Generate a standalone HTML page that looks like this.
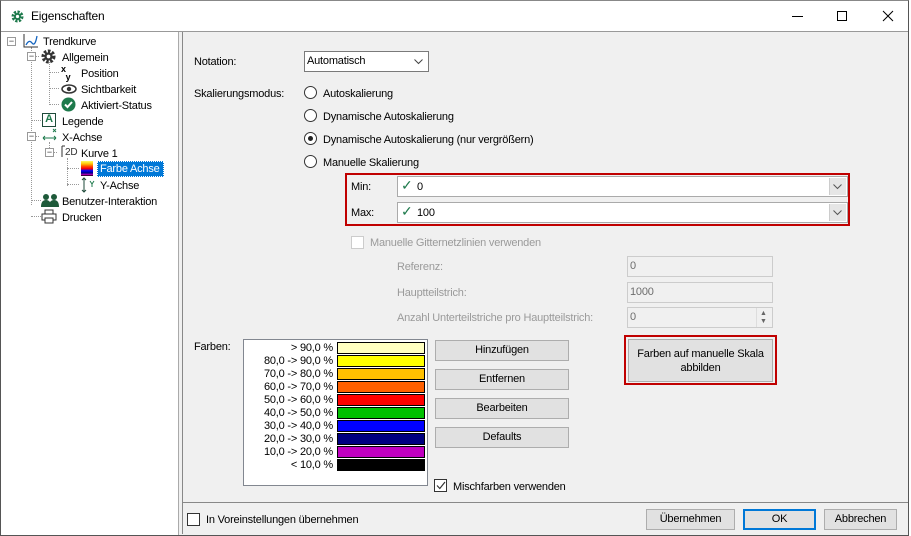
<!DOCTYPE html>
<html><head><meta charset="utf-8"><style>
*{box-sizing:border-box;margin:0;padding:0}
body{width:911px;height:536px;background:#fff;font-family:"Liberation Sans",sans-serif;font-size:11px;line-height:17px;letter-spacing:-0.2px;color:#000;position:relative;overflow:hidden}
.a{position:absolute;white-space:nowrap}
.win{position:absolute;left:0;top:0;width:909px;height:536px;border:1px solid #555;border-top-color:#888;background:#f0f0f0}
.title{position:absolute;left:0;top:0;width:907px;height:31px;background:#fff;border-bottom:1px solid #999}
.tree{position:absolute;left:0;top:31px;width:178px;height:503px;background:#fff;border-right:1px solid #aaa}
.tl{position:absolute;white-space:nowrap}
.dot{position:absolute;border-color:#999;border-style:dotted;border-width:0}
.pm{position:absolute;width:9px;height:9px;border:1px solid #999;background:#fff;font-size:9px;line-height:6px;text-align:center;color:#333;letter-spacing:0}
.btn{position:absolute;background:#e1e1e1;border:1px solid #adadad;text-align:center;line-height:19px;white-space:nowrap}
.fld{position:absolute;background:#fff;border:1px solid #7a7a7a}
.dis{position:absolute;background:#f0f0f0;border:1px solid #ccc;color:#6d6d6d;padding-left:2px;line-height:19px}
.rad{position:absolute;width:13px;height:13px;border:1px solid #333;border-radius:50%;background:#fff}
.cb{position:absolute;width:13px;height:13px;border:1px solid #333;background:#fff}
.gray{color:#9a9a9a}
.sw{position:absolute;left:337px;width:88px;height:12px;border:1px solid #000}
.sl{position:absolute;right:578px;text-align:right;line-height:13px;white-space:nowrap}
.dd{position:absolute;width:17px;top:1px;bottom:1px;right:1px;background:#e6e6e6;border-left:1px solid #ccc}
</style></head><body>
<div class="win">
<div class="title">
<svg class="a" style="left:10px;top:9px" width="13" height="13" viewBox="0 0 13 13"><circle cx="6.5" cy="6.5" r="4.5" fill="none" stroke="#1e7a4c" stroke-width="3" stroke-dasharray="2.2 1.3"/><circle cx="6.5" cy="6.5" r="3.5" fill="#1e7a4c"/><circle cx="6.5" cy="6.5" r="1.6" fill="#fff"/></svg>
<div class="a" style="left:30px;top:7px;font-size:12px">Eigenschaften</div>
<div class="a" style="left:791px;top:15px;width:11px;height:1px;background:#000"></div>
<div class="a" style="left:836px;top:10px;width:10px;height:10px;border:1px solid #000"></div>
<svg class="a" style="left:881px;top:9px" width="12" height="12"><path d="M1 1L11 11M11 1L1 11" stroke="#000" stroke-width="1"/></svg>
</div>
<div class="tree">
<div class="dot" style="left:30px;top:15px;height:158px;border-left-width:1px"></div>
<div class="dot" style="left:30px;top:24px;width:8px;border-top-width:1px"></div>
<div class="dot" style="left:30px;top:88px;width:10px;border-top-width:1px"></div>
<div class="dot" style="left:30px;top:104px;width:8px;border-top-width:1px"></div>
<div class="dot" style="left:30px;top:168px;width:10px;border-top-width:1px"></div>
<div class="dot" style="left:30px;top:184px;width:10px;border-top-width:1px"></div>
<div class="dot" style="left:48px;top:30px;height:43px;border-left-width:1px"></div>
<div class="dot" style="left:48px;top:40px;width:10px;border-top-width:1px"></div>
<div class="dot" style="left:48px;top:56px;width:10px;border-top-width:1px"></div>
<div class="dot" style="left:48px;top:72px;width:10px;border-top-width:1px"></div>
<div class="dot" style="left:48px;top:110px;height:12px;border-left-width:1px"></div>
<div class="dot" style="left:48px;top:120px;width:8px;border-top-width:1px"></div>
<div class="dot" style="left:66px;top:126px;height:28px;border-left-width:1px"></div>
<div class="dot" style="left:66px;top:136px;width:12px;border-top-width:1px"></div>
<div class="dot" style="left:66px;top:152px;width:12px;border-top-width:1px"></div>
<div class="pm" style="left:6px;top:5px">−</div>
<div class="pm" style="left:26px;top:20px">−</div>
<div class="pm" style="left:26px;top:100px">−</div>
<div class="pm" style="left:44px;top:116px">−</div>
<svg class="a" style="left:22px;top:1px" width="16" height="16"><path d="M1 1V14H15" stroke="#333" fill="none"/><path d="M3 12Q6 6 9 10T14 3" stroke="#1565c0" fill="none" stroke-width="1.3"/></svg>
<div class="tl" style="left:42px;top:2px">Trendkurve</div>
<svg class="a" style="left:40px;top:17px" width="15" height="15" viewBox="0 0 13 13"><circle cx="6.5" cy="6.5" r="4.6" fill="none" stroke="#333" stroke-width="3" stroke-dasharray="2.2 1.3"/><circle cx="6.5" cy="6.5" r="3.6" fill="#333"/><circle cx="6.5" cy="6.5" r="1.6" fill="#fff"/></svg>
<div class="tl" style="left:61px;top:18px">Allgemein</div>
<div class="tl" style="left:60px;top:33px;font-size:9px;line-height:8px;font-weight:bold">x<br>&nbsp;&nbsp;y</div>
<div class="tl" style="left:80px;top:34px">Position</div>
<svg class="a" style="left:60px;top:52px" width="16" height="10"><ellipse cx="8" cy="5" rx="7" ry="4" fill="none" stroke="#333" stroke-width="1.5"/><circle cx="8" cy="5" r="2.2" fill="#333"/></svg>
<div class="tl" style="left:80px;top:50px">Sichtbarkeit</div>
<svg class="a" style="left:60px;top:65px" width="15" height="15"><circle cx="7.5" cy="7.5" r="7" fill="#1e7a4c"/><path d="M4 7.5L6.5 10L11 5" stroke="#fff" stroke-width="2" fill="none"/></svg>
<div class="tl" style="left:80px;top:66px">Aktiviert-Status</div>
<div class="a" style="left:41px;top:81px;width:14px;height:14px;border:1.5px solid #1e4a3a;font-size:11px;font-weight:bold;line-height:11px;text-align:center;color:#1e7a4c">A</div>
<div class="tl" style="left:61px;top:82px">Legende</div>
<svg class="a" style="left:40px;top:95px" width="18" height="16"><path d="M2 11H15M2 11L4 9M2 11L4 13M15 11L13 9M15 11L13 13" stroke="#1e7a4c" fill="none"/><path d="M12 2L15 5M15 2L12 5" stroke="#1e7a4c"/></svg>
<div class="tl" style="left:61px;top:98px">X-Achse</div>
<svg class="a" style="left:60px;top:112px" width="18" height="15"><path d="M1 2H4M1 2V13" stroke="#333" fill="none"/><text x="4" y="11" font-size="10" font-family="Liberation Sans" fill="#333">2D</text></svg>
<div class="tl" style="left:80px;top:114px">Kurve 1</div>
<div class="a" style="left:80px;top:129px;width:12px;height:15px;background:linear-gradient(#ffff60 0,#ffc000 20%,#ff5000 35%,#ff0000 50%,#0000ff 65%,#000080 80%,#c000c0 90%,#000 100%)"></div>
<div class="a" style="left:96px;top:129px;width:67px;height:16px;background:#0078d7;border:1px dotted #fff"></div>
<div class="tl" style="left:99px;top:129px;color:#fff">Farbe Achse</div>
<svg class="a" style="left:79px;top:145px" width="16" height="16"><path d="M4 1V15M2 3L4 1L6 3M2 13L4 15L6 13" stroke="#1e4a3a" fill="none"/><path d="M10 4L12 7L14 4M12 7V10" stroke="#1e7a4c" fill="none"/></svg>
<div class="tl" style="left:99px;top:146px">Y-Achse</div>
<svg class="a" style="left:40px;top:161px" width="18" height="14"><circle cx="5" cy="4" r="3" fill="#1e5a3a"/><circle cx="13" cy="4" r="3" fill="#1e5a3a"/><path d="M0 14Q0 7 5 7T10 14ZM8 14Q8 7 13 7T18 14Z" fill="#1e5a3a"/></svg>
<div class="tl" style="left:61px;top:162px">Benutzer-Interaktion</div>
<svg class="a" style="left:40px;top:177px" width="16" height="15"><rect x="4" y="1" width="8" height="4" fill="none" stroke="#333"/><rect x="1" y="5" width="14" height="6" fill="none" stroke="#333"/><rect x="4" y="9" width="8" height="5" fill="#fff" stroke="#333"/></svg>
<div class="tl" style="left:61px;top:178px">Drucken</div>
</div>
</div>
<div class="a" style="left:182px;top:32px;width:1px;height:502px;background:#888"></div>

<div class="a" style="left:194px;top:54px">Notation:</div>
<div class="fld" style="left:304px;top:51px;width:125px;height:21px;padding:1px 2px">Automatisch</div>
<svg class="a" style="left:414px;top:59px" width="9" height="6"><path d="M0.5 0.5L4.5 4.5L8.5 0.5" stroke="#444" fill="none"/></svg>

<div class="a" style="left:194px;top:86px">Skalierungsmodus:</div>
<div class="rad" style="left:304px;top:86px"></div><div class="a" style="left:323px;top:86px">Autoskalierung</div>
<div class="rad" style="left:304px;top:109px"></div><div class="a" style="left:323px;top:109px">Dynamische Autoskalierung</div>
<div class="rad" style="left:304px;top:132px"></div><div class="a" style="left:308px;top:136px;width:5px;height:5px;background:#222;border-radius:50%"></div><div class="a" style="left:323px;top:132px">Dynamische Autoskalierung (nur vergrößern)</div>
<div class="rad" style="left:304px;top:155px"></div><div class="a" style="left:323px;top:155px">Manuelle Skalierung</div>

<div class="a" style="left:345px;top:173px;width:505px;height:53px;border:2px solid #c00000"></div>
<div class="a" style="left:351px;top:179px">Min:</div>
<div class="fld" style="left:397px;top:176px;width:451px;height:21px;border-color:#aaa"><div class="dd"></div></div>
<div class="a" style="left:401px;top:177px;color:#1e7a4c;font-size:14px">✓</div><div class="a" style="left:417px;top:179px">0</div>
<svg class="a" style="left:833px;top:184px" width="9" height="6"><path d="M0.5 0.5L4.5 4.5L8.5 0.5" stroke="#555" fill="none"/></svg>
<div class="a" style="left:351px;top:205px">Max:</div>
<div class="fld" style="left:397px;top:202px;width:451px;height:21px;border-color:#aaa"><div class="dd"></div></div>
<div class="a" style="left:401px;top:203px;color:#1e7a4c;font-size:14px">✓</div><div class="a" style="left:417px;top:205px">100</div>
<svg class="a" style="left:833px;top:210px" width="9" height="6"><path d="M0.5 0.5L4.5 4.5L8.5 0.5" stroke="#555" fill="none"/></svg>

<div class="cb" style="left:351px;top:236px;border-color:#ccc"></div>
<div class="a gray" style="left:370px;top:235px">Manuelle Gitternetzlinien verwenden</div>
<div class="a gray" style="left:397px;top:259px">Referenz:</div>
<div class="dis" style="left:627px;top:256px;width:146px;height:21px">0</div>
<div class="a gray" style="left:397px;top:285px">Hauptteilstrich:</div>
<div class="dis" style="left:627px;top:282px;width:146px;height:21px">1000</div>
<div class="a gray" style="left:397px;top:310px">Anzahl Unterteilstriche pro Hauptteilstrich:</div>
<div class="dis" style="left:627px;top:307px;width:146px;height:21px">0</div>
<div class="a" style="left:756px;top:308px;width:16px;height:19px;border-left:1px solid #ddd"></div>
<div class="a" style="left:760px;top:310px;font-size:7px;line-height:8px;color:#666">▲<br>▼</div>

<div class="a" style="left:194px;top:339px">Farben:</div>
<div class="a" style="left:243px;top:339px;width:185px;height:147px;background:#fff;border:1px solid #828790"></div>
<div class="sl" style="top:342px">&gt; 90,0 %</div><div class="sw" style="top:342px;background:#ffffc0"></div>
<div class="sl" style="top:355px">80,0 -&gt; 90,0 %</div><div class="sw" style="top:355px;background:#ffff00"></div>
<div class="sl" style="top:368px">70,0 -&gt; 80,0 %</div><div class="sw" style="top:368px;background:#ffc000"></div>
<div class="sl" style="top:381px">60,0 -&gt; 70,0 %</div><div class="sw" style="top:381px;background:#ff6000"></div>
<div class="sl" style="top:394px">50,0 -&gt; 60,0 %</div><div class="sw" style="top:394px;background:#ff0000"></div>
<div class="sl" style="top:407px">40,0 -&gt; 50,0 %</div><div class="sw" style="top:407px;background:#00c000"></div>
<div class="sl" style="top:420px">30,0 -&gt; 40,0 %</div><div class="sw" style="top:420px;background:#0000ff"></div>
<div class="sl" style="top:433px">20,0 -&gt; 30,0 %</div><div class="sw" style="top:433px;background:#000080"></div>
<div class="sl" style="top:446px">10,0 -&gt; 20,0 %</div><div class="sw" style="top:446px;background:#c000c0"></div>
<div class="sl" style="top:459px">&lt; 10,0 %</div><div class="sw" style="top:459px;background:#000"></div>

<div class="btn" style="left:435px;top:340px;width:134px;height:21px">Hinzufügen</div>
<div class="btn" style="left:435px;top:369px;width:134px;height:21px">Entfernen</div>
<div class="btn" style="left:435px;top:398px;width:134px;height:21px">Bearbeiten</div>
<div class="btn" style="left:435px;top:427px;width:134px;height:21px">Defaults</div>

<div class="a" style="left:624px;top:335px;width:153px;height:50px;border:2px solid #c00000"></div>
<div class="btn" style="left:628px;top:339px;width:145px;height:43px;line-height:14px;padding-top:7px">Farben auf manuelle Skala<br>abbilden</div>

<div class="cb" style="left:434px;top:479px"></div>
<svg class="a" style="left:436px;top:481px" width="10" height="9"><path d="M1 4.5L3.8 7.5L9 1" stroke="#333" fill="none" stroke-width="1.2"/></svg>
<div class="a" style="left:453px;top:479px">Mischfarben verwenden</div>

<div class="a" style="left:183px;top:502px;width:725px;height:1px;background:#888"></div>
<div class="cb" style="left:187px;top:513px"></div>
<div class="a" style="left:206px;top:512px">In Voreinstellungen übernehmen</div>
<div class="btn" style="left:646px;top:509px;width:89px;height:21px">Übernehmen</div>
<div class="btn" style="left:743px;top:509px;width:73px;height:21px;border:2px solid #0078d7;line-height:17px">OK</div>
<div class="btn" style="left:824px;top:509px;width:73px;height:21px">Abbrechen</div>
</body></html>
